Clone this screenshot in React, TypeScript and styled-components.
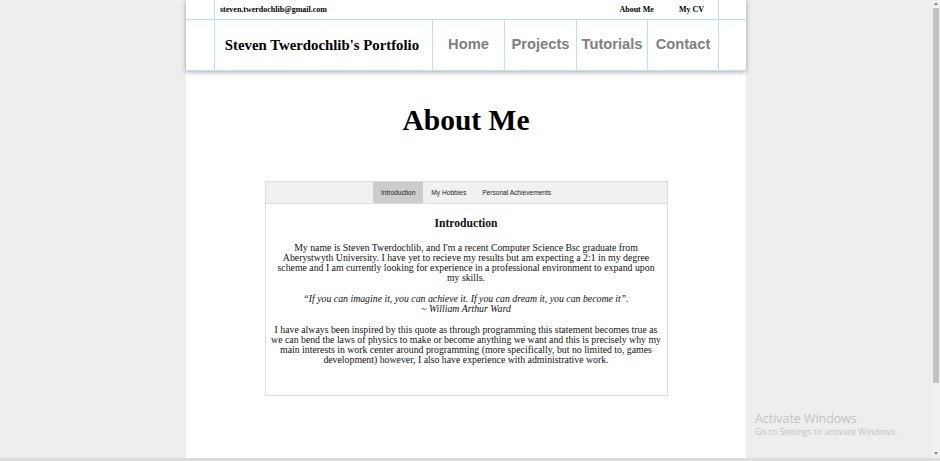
import React from "react";
import styled, { createGlobalStyle } from "styled-components";

const Global = createGlobalStyle`
  html, body { margin: 0; padding: 0; background: #eeeeee; overflow: hidden; }
  * { box-sizing: border-box; }
`;

const BLUE = "#b7e3f9";

const Screen = styled.div`
  width: 940px;
  height: 461px;
  display: flex;
  flex-direction: column;
  position: relative;
  overflow: hidden;
`;

const Viewport = styled.div`
  flex: 1;
  display: flex;
  min-height: 0;
`;

const Canvas = styled.div`
  flex: 1;
  background: #eeeeee;
  display: flex;
  justify-content: center;
`;

const Page = styled.div`
  width: 560px;
  background: #ffffff;
  display: flex;
  flex-direction: column;
`;

const Header = styled.header`
  display: flex;
  flex-direction: column;
  background: #fff;
  border-bottom: 1px solid ${BLUE};
  box-shadow: 0 1px 5px rgba(0, 0, 0, 0.35);
  position: relative;
  z-index: 1;
`;

const TopRow = styled.div`
  display: flex;
  height: 20px;
  border-bottom: 1px solid ${BLUE};
`;

const NavRow = styled.nav`
  display: flex;
  height: 50px;
`;

const SideLeft = styled.div`
  width: 29px;
  border-right: 1px solid ${BLUE};
`;

const SideRight = styled.div`
  flex: 1;
  border-left: 1px solid ${BLUE};
`;

const TopInner = styled.div`
  width: 503px;
  display: flex;
  align-items: center;
  justify-content: space-between;
  padding: 0 14px 0 5px;
  font-family: "Liberation Serif", "Times New Roman", serif;
  font-weight: bold;
  font-size: 8px;
  color: #000;
`;

const TopLinks = styled.div`
  display: flex;
  gap: 25px;
`;

const Brand = styled.div`
  width: 218px;
  border-right: 1px solid ${BLUE};
  display: flex;
  align-items: center;
  justify-content: center;
  padding-right: 3px;
  font-family: "Liberation Serif", "Times New Roman", serif;
  font-weight: bold;
  font-size: 14.8px;
  color: #000;
`;

const NavItem = styled.div<{ $w: number }>`
  width: ${(p) => p.$w}px;
  border-right: 1px solid ${BLUE};
  display: flex;
  align-items: center;
  justify-content: center;
  padding-bottom: 2px;
  font-family: "Liberation Sans", Arial, sans-serif;
  font-weight: bold;
  font-size: 14.7px;
  color: #808080;
  &:last-child { border-right: none; }
`;

const NavItems = styled.div`
  display: flex;
`;

const Main = styled.main`
  display: flex;
  flex-direction: column;
  align-items: center;
`;

const Title = styled.h1`
  margin: 29px 0 0;
  height: 40px;
  line-height: 40px;
  font-family: "Liberation Serif", "Times New Roman", serif;
  font-weight: bold;
  font-size: 29.5px;
  color: #000;
`;

const TabBox = styled.section`
  margin-top: 41px;
  width: 403px;
  height: 215px;
  border: 1px solid #dddddd;
  display: flex;
  flex-direction: column;
`;

const TabBar = styled.div`
  height: 22px;
  background: #f1f1f1;
  border-bottom: 1px solid #dddddd;
  display: flex;
  justify-content: center;
`;

const Tab = styled.div<{ $active?: boolean }>`
  padding: 0 8px;
  display: flex;
  align-items: center;
  font-family: "Liberation Sans", Arial, sans-serif;
  font-size: 6.6px;
  color: #222;
  background: ${(p) => (p.$active ? "#cccccc" : "transparent")};
`;

const TabContent = styled.div`
  padding: 9px 5px 0;
  text-align: center;
  font-family: "Liberation Serif", "Times New Roman", serif;
  color: #111;
`;

const SubTitle = styled.h3`
  margin: 0 0 8px;
  font-size: 11.6px;
  font-weight: bold;
  line-height: 22px;
`;

const Para = styled.p<{ $italic?: boolean }>`
  margin: 0 0 11px;
  font-size: 9.8px;
  line-height: 10px;
  font-style: ${(p) => (p.$italic ? "italic" : "normal")};
`;

const Scrollbar = styled.div`
  width: 8px;
  background: #f1f1f1;
  display: flex;
  flex-direction: column;
  align-items: center;
  padding-top: 2px;
`;

const Arrow = styled.div<{ $down?: boolean }>`
  width: 0;
  height: 0;
  border-left: 2.5px solid transparent;
  border-right: 2.5px solid transparent;
  ${(p) =>
    p.$down
      ? "border-top: 3px solid #8a8a8a; margin-top: auto; margin-bottom: 3px;"
      : "border-bottom: 3px solid #8a8a8a;"}
`;

const Thumb = styled.div`
  margin-top: 3px;
  width: 6px;
  height: 375px;
  background: #c2c2c2;
`;

const Taskbar = styled.div`
  height: 3px;
  background: #dcdcdc;
  flex-shrink: 0;
`;

const Watermark = styled.div`
  position: absolute;
  left: 755px;
  top: 411px;
  font-family: "Open Sans", "Noto Sans", sans-serif;
  color: #c3c3c3;
  pointer-events: none;
`;

const WmTitle = styled.div`
  font-size: 12.4px;
  line-height: 16px;
`;

const WmSub = styled.div`
  font-size: 8.7px;
  line-height: 10px;
`;

export default function App() {
  return (
    <Screen>
      <Global />
      <Viewport>
        <Canvas>
          <Page>
            <Header>
              <TopRow>
                <SideLeft />
                <TopInner>
                  <span>steven.twerdochlib@gmail.com</span>
                  <TopLinks>
                    <span>About Me</span>
                    <span>My CV</span>
                  </TopLinks>
                </TopInner>
                <SideRight />
              </TopRow>
              <NavRow>
                <SideLeft />
                <Brand>Steven Twerdochlib's Portfolio</Brand>
                <NavItems>
                  <NavItem $w={72}>Home</NavItem>
                  <NavItem $w={72}>Projects</NavItem>
                  <NavItem $w={71}>Tutorials</NavItem>
                  <NavItem $w={70}>Contact</NavItem>
                </NavItems>
                <SideRight />
              </NavRow>
            </Header>
            <Main>
              <Title>About Me</Title>
              <TabBox>
                <TabBar>
                  <Tab $active>Introduction</Tab>
                  <Tab>My Hobbies</Tab>
                  <Tab>Personal Achievements</Tab>
                </TabBar>
                <TabContent>
                  <SubTitle>Introduction</SubTitle>
                  <Para>
                    My name is Steven Twerdochlib, and I'm a recent Computer Science Bsc graduate from
                    Aberystwyth University. I have yet to recieve my results but am expecting a 2:1 in my
                    degree scheme and I am currently looking for experience in a professional environment
                    to expand upon my skills.
                  </Para>
                  <Para $italic>
                    “If you can imagine it, you can achieve it. If you can dream it, you can become it”.
                    <br />~ William Arthur Ward
                  </Para>
                  <Para>
                    I have always been inspired by this quote as through programming this statement becomes
                    true as we can bend the laws of physics to make or become anything we want and this is
                    precisely why my main interests in work center around programming (more specifically,
                    but no limited to, games development) however, I also have experience with
                    administrative work.
                  </Para>
                </TabContent>
              </TabBox>
            </Main>
          </Page>
        </Canvas>
        <Scrollbar>
          <Arrow />
          <Thumb />
          <Arrow $down />
        </Scrollbar>
      </Viewport>
      <Taskbar />
      <Watermark>
        <WmTitle>Activate Windows</WmTitle>
        <WmSub>Go to Settings to activate Windows.</WmSub>
      </Watermark>
    </Screen>
  );
}
